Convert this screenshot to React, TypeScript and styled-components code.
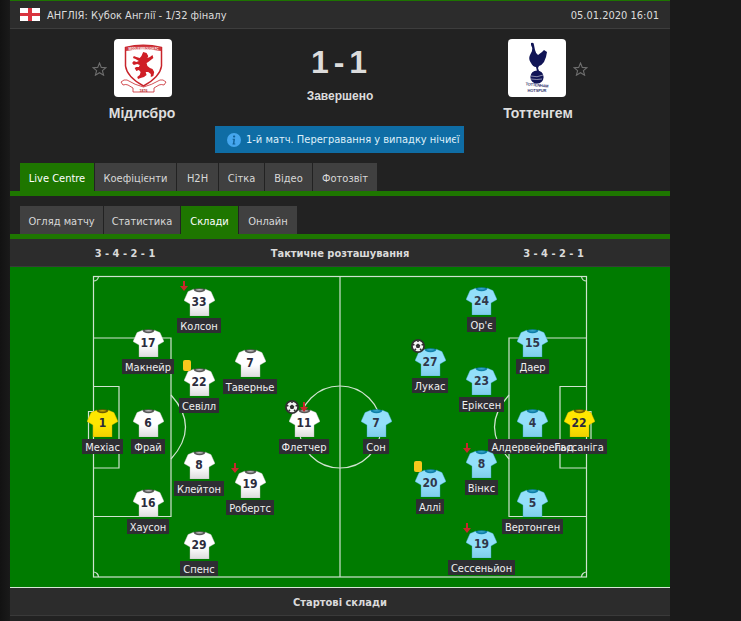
import React from "react";
import styled, { createGlobalStyle } from "styled-components";

const Global = createGlobalStyle`
  html, body { margin: 0; padding: 0; background: #191919; }
  body { font-family: "DejaVu Sans", "Liberation Sans", sans-serif; font-stretch: condensed; font-size: 11px; color: #e6e6e6; }
`;

const Page = styled.div`
  width: 741px;
  height: 621px;
  overflow: hidden;
  padding-left: 10px;
  box-sizing: border-box;
  background: linear-gradient(90deg, #121212 0, #1a1a1a 10px);
`;

const Container = styled.div`
  width: 660px;
  height: 621px;
  background: #222222;
  display: flex;
  flex-direction: column;
  border-top: 1px solid #1d7400;
  box-sizing: border-box;
`;

const LeagueBar = styled.div`
  height: 28px;
  box-sizing: border-box;
  background: #2c2c2c;
  border-bottom: 1px solid #3d3d3d;
  display: flex;
  align-items: center;
  padding: 0 11px 0 10px;
  gap: 7px;
`;

const LeagueName = styled.span`
  flex: 1;
  margin-top: 2px;
  color: #dcdcdc;
`;

const DateText = styled.span`
  margin-top: 2px;
  color: #dcdcdc;
`;

const MatchGrid = styled.div`
  display: grid;
  grid-template-columns: 264px 1fr 264px;
  height: 97px;
  padding-top: 10px;
  box-sizing: border-box;
`;

const Team = styled.div`
  display: flex;
  flex-direction: column;
  align-items: stretch;
`;

const TeamRow = styled.div`
  display: grid;
  grid-template-columns: 1fr 58px 1fr;
  align-items: center;
  column-gap: 7px;
  padding-left: ${p => (p.$left ? "1px" : "0")};
  padding-right: ${p => (p.$left ? "0" : "2px")};
`;

const Crest = styled.div`
  grid-column: 2;
  grid-row: 1;
  width: 58px;
  height: 58px;
  background: #fff;
  border-radius: 4px;
  overflow: hidden;
`;

const StarSlot = styled.div`
  grid-row: 1;
  grid-column: ${p => (p.$left ? 1 : 3)};
  justify-self: ${p => (p.$left ? "end" : "start")};
  display: flex;
  margin-top: 2px;
`;

const TeamName = styled.div`
  font-family: "Liberation Sans", Arial, sans-serif;
  font-stretch: normal;
  font-weight: 700;
  font-size: 14px;
  line-height: 16px;
  margin-top: 8px;
  text-align: center;
  color: #dedede;
`;

const Center = styled.div`
  display: flex;
  flex-direction: column;
  align-items: center;
`;

const Score = styled.div`
  font-family: "Liberation Sans", Arial, sans-serif;
  font-stretch: normal;
  font-weight: 700;
  font-size: 32px;
  line-height: 46px;
  word-spacing: -4px;
  margin-right: 2px;
  color: #dcdcdc;
`;

const Status = styled.div`
  font-family: "Liberation Sans", Arial, sans-serif;
  font-stretch: normal;
  font-weight: 700;
  font-size: 12px;
  line-height: 14px;
  margin-top: 4px;
  color: #dcdcdc;
`;

const BannerRow = styled.div`
  display: flex;
  padding-left: 205px;
`;

const Banner = styled.div`
  width: 249px;
  height: 27px;
  box-sizing: border-box;
  background: #0f6da5;
  display: flex;
  align-items: center;
  gap: 5px;
  padding-left: 12px;
  color: #dff0fa;
  white-space: nowrap;

  svg { flex: none; }
`;

const Tabs = styled.div`
  display: flex;
  gap: 1px;
  height: 28px;
  padding-left: 10px;
  margin-top: ${p => p.$mt}px;
`;

const Tab = styled.div`
  width: ${p => p.$w}px;
  padding-top: 2px;
  box-sizing: border-box;
  background: ${p => (p.$active ? "#1e7600" : "#404040")};
  color: ${p => (p.$active ? "#ffffff" : "#d8d8d8")};
  display: flex;
  align-items: center;
  justify-content: center;
`;

const GreenBand = styled.div`
  height: 5px;
  background: #1e7600;
`;

const TacticBar = styled.div`
  height: 28px;
  padding-top: 2px;
  box-sizing: border-box;
  background: #2c2c2c;
  border-bottom: 1px solid #3a3a3a;
  display: grid;
  grid-template-columns: 230px 200px 227px;
  align-items: center;
  text-align: center;
  font-weight: 700;
  color: #dadada;
`;

const Pitch = styled.div`
  position: relative;
  height: 320px;
  background: #007b00;
  border-bottom: 1px solid #d8e8d8;
  flex: none;
`;

const PitchLines = styled.svg`
  position: absolute;
  left: 0;
  top: 0;
`;

const Player = styled.div.attrs(p => ({ style: { left: p.$x, top: p.$y } }))`
  position: absolute;
  width: 0;
  height: 46px;
  display: flex;
  flex-direction: column;
  align-items: center;
`;

const ShirtBox = styled.div`
  position: relative;
  flex: none;
  width: 31px;
  height: 28px;
  margin-bottom: 2px;
`;

const Number = styled.span`
  position: absolute;
  left: 0;
  right: 0;
  top: 7px;
  text-align: center;
  font-weight: 700;
  font-size: 12px;
  line-height: 15px;
  color: ${p => (p.$kit === "away" ? "#30364a" : "#2b2b3c")};
`;

const Label = styled.div`
  flex: none;
  height: 15px;
  line-height: 17px;
  padding: 0 3px;
  background: #2e2e33;
  white-space: nowrap;
  color: #f0f0f0;
`;

const LabelText = styled.span`
  position: relative;
  z-index: 3;
`;

const Marker = styled.div`
  position: absolute;
  display: flex;
  z-index: 2;
  left: ${p => p.$l}px;
  top: ${p => p.$t}px;
`;

const Card = styled.div`
  width: 8px;
  height: 11px;
  border-radius: 2px;
  background: #f8c81c;
`;

const Footer = styled.div`
  height: 28px;
  padding-top: 2px;
  box-sizing: border-box;
  background: #2c2c2c;
  border-bottom: 1px solid #3a3a3a;
  display: flex;
  align-items: center;
  justify-content: center;
  font-weight: 700;
  color: #dadada;
`;

const Flag = () => (
  <svg width="20" height="13" viewBox="0 0 20 13">
    <rect width="20" height="13" fill="#fff" />
    <rect x="8" width="4" height="13" fill="#d9353f" />
    <rect y="5" width="20" height="3" fill="#d9353f" />
  </svg>
);

const Star = () => (
  <svg width="15" height="14" viewBox="0 0 15 14">
    <path d="M7.5 1 L9.3 5.4 L14 5.7 L10.4 8.7 L11.6 13.2 L7.5 10.7 L3.4 13.2 L4.6 8.7 L1 5.7 L5.7 5.4 Z" fill="none" stroke="#6e6e6e" strokeWidth="1.1" />
  </svg>
);

const InfoIcon = () => (
  <svg width="14" height="14" viewBox="0 0 14 14">
    <circle cx="7" cy="7" r="7" fill="#45a6ee" />
    <rect x="6" y="2.6" width="2.2" height="2" rx="0.8" fill="#0f5f96" />
    <path d="M5.6 5.8 H8 L7.4 10.4 H8.3 V11.4 H5.5 V10.4 H6 L6.4 6.8 H5.6 Z" fill="#0f5f96" />
  </svg>
);

const Boro = () => (
  <svg width="58" height="58" viewBox="0 0 58 58">
    <path d="M11.5 8.5 Q29 4 47.5 8.5 L47.5 27 Q46 38 29.5 47 Q13 38 11.5 27 Z" fill="#fff" stroke="#c8242b" strokeWidth="1.5" />
    <path d="M12 8.5 Q29 4.5 47 8.5 L47 12 Q29 8.5 12 12 Z" fill="#cf3a40" />
    <text x="29.5" y="10.8" textAnchor="middle" fontSize="2.8" fontFamily="Liberation Sans" fontWeight="700" fill="#fff" textLength="30">MIDDLESBROUGH FC</text>
    <path transform="translate(4.5 0) scale(0.85 1)" d="M29 13 L33 14 L35 17 L34 19 L37 18 L40 16 L41 19 L38 21 L35 23 L33 24 L34 27 L37 29 L40 30 L42 33 L41 37 L38 38 L38 35 L35 33 L32 33 L33 36 L30 38 L26 39 L23 40 L22 38 L25 36 L26 33 L24 31 L21 32 L19 29 L21 28 L24 28 L25 26 L22 25 L18 26 L16 24 L18 22 L21 23 L24 22 L20 20 L17 19 L18 17 L21 18 L25 19 L27 17 Z" fill="#cf1f26" />
    <path d="M7 43 q3 -3 6 -2 q8 5 16.500 7 q8 -2 16.500 -7 q3 -1 6 2 l-2 3 q-3 -1 -5 0 l-5 3 v4 h-21 v-4 l-5 -3 q-2 -1 -5 0 z" fill="#fff" stroke="#c8242b" strokeWidth="0.8" />
    <text x="29.500" y="52.500" textAnchor="middle" fontSize="3.6" fontFamily="Liberation Sans" fontWeight="700" fill="#b8242b">1876</text>
  </svg>
);

const Spurs = () => (
  <svg width="58" height="58" viewBox="0 0 58 58">
    <path d="M23 4 q3 -1 3 2 l1 5 q1 4 3 5 l4 -3 l2 -2 l3 2 l-1 5 l-2 5 q-2 3 -5 4 l-1 2 l1 3 l-2 0 l-1 -4 q-3 0 -5 -4 q-3 -4 -1 -8 l2 -4 q1 -3 -1 -6 z" fill="#111556" />
    <circle cx="29" cy="38" r="6.6" fill="#111556" />
    <path d="M23 37 q6 2 12 -1 M23 40 q6 1 11 0" stroke="#fff" strokeWidth="0.5" fill="none" />
    <text x="29" y="47.500" textAnchor="middle" fontSize="4" fontFamily="Liberation Sans" fontWeight="700" fill="#30336e" transform="rotate(6 29 47)" textLength="23">TOTTENHAM</text>
    <text x="29" y="53" textAnchor="middle" fontSize="4" fontFamily="Liberation Sans" fontWeight="700" fill="#30336e" textLength="19">HOTSPUR</text>
  </svg>
);

const kits = {
  home: { a: "#ffffff", b: "#dcdcdc", collar: "#585858", trim: "#bbbbbb" },
  away: { a: "#93dffa", b: "#7fcdea", collar: "#0e7fa8", trim: "#3aa6c8" },
  keeper: { a: "#ffe600", b: "#f0d000", collar: "#6f5d00", trim: "#c8a800" },
};

const Shirt = ({ kit }) => {
  const k = kits[kit];
  const id = `shirt-${kit}`;
  return (
    <svg width="31" height="28" viewBox="0 0 31 28">
      <defs>
        <linearGradient id={id} x1="0" y1="0" x2="0" y2="1">
          <stop offset="0.55" stopColor={k.a} />
          <stop offset="1" stopColor={k.b} />
        </linearGradient>
      </defs>
      <path d="M9.5 1.2 Q15.5 4.5 21.5 1.2 L27 3.6 L31 12.5 L25 16 L25 28 L6 28 L6 16 L0 12.5 L4 3.6 Z" fill={`url(#${id})`} stroke={k.trim} strokeWidth="0.4" />
      <path d="M9.5 1.2 Q15.5 -0.8 21.5 1.2 L20.5 3 Q15.5 5.5 10.5 3 Z" fill={k.collar} />
      <path d="M12 1.4 Q15.5 0.8 19 1.4 L18.5 2.2 Q15.5 3 12.5 2.2 Z" fill={k.trim} />
    </svg>
  );
};

const Arrow = () => (
  <svg width="8" height="10" viewBox="0 0 8 10">
    <path d="M3 0 H5 V5 H8 L4 10 L0 5 H3 Z" fill="#c8282c" />
  </svg>
);

const Ball = () => (
  <svg width="14" height="14" viewBox="0 0 14 14">
    <circle cx="7" cy="7" r="7" fill="#303030" />
    <circle cx="7" cy="7" r="5.2" fill="#f4f4f4" />
    <path d="M7 4.6 L9.3 6.3 L8.4 9 H5.6 L4.7 6.3 Z" fill="#303030" />
    <path d="M7 1.6 V3 M12.2 5.4 L10.6 6 M10.2 11.2 L9.2 9.8 M3.8 11.2 L4.8 9.8 M1.8 5.4 L3.4 6" stroke="#303030" strokeWidth="1.6" />
  </svg>
);

type P = { x: number; y: number; n: number; name: string; kit: string; arrow?: boolean; card?: boolean; ball?: boolean };

const players: P[] = [
  { x: 199, y: 288, n: 33, name: "Колсон", kit: "home", arrow: true },
  { x: 148, y: 329, n: 17, name: "Макнейр", kit: "home" },
  { x: 199, y: 368, n: 22, name: "Севілл", kit: "home", card: true },
  { x: 250, y: 349, n: 7, name: "Тавернье", kit: "home" },
  { x: 102.5, y: 409, n: 1, name: "Мехіас", kit: "keeper" },
  { x: 148, y: 409, n: 6, name: "Фрай", kit: "home" },
  { x: 304, y: 409, n: 11, name: "Флетчер", kit: "home", arrow: true, ball: true },
  { x: 199, y: 451, n: 8, name: "Клейтон", kit: "home" },
  { x: 250, y: 470, n: 19, name: "Робертс", kit: "home", arrow: true },
  { x: 148, y: 489, n: 16, name: "Хаусон", kit: "home" },
  { x: 199, y: 531, n: 29, name: "Спенс", kit: "home" },
  { x: 481.5, y: 287, n: 24, name: "Ор'є", kit: "away" },
  { x: 532.5, y: 329, n: 15, name: "Даер", kit: "away" },
  { x: 430, y: 348, n: 27, name: "Лукас", kit: "away", ball: true },
  { x: 481.5, y: 367, n: 23, name: "Еріксен", kit: "away" },
  { x: 376, y: 409, n: 7, name: "Сон", kit: "away" },
  { x: 579, y: 409, n: 22, name: "Гассаніга", kit: "keeper" },
  { x: 532.5, y: 409, n: 4, name: "Алдервейрельд", kit: "away" },
  { x: 481.5, y: 450, n: 8, name: "Вінкс", kit: "away", arrow: true },
  { x: 430, y: 469, n: 20, name: "Аллі", kit: "away", card: true },
  { x: 532.5, y: 489, n: 5, name: "Вертонген", kit: "away" },
  { x: 481.5, y: 530, n: 19, name: "Сессеньйон", kit: "away", arrow: true },
];

const L = "#cfe3cf";

const Lines = () => (
  <PitchLines width="660" height="320" viewBox="0 0 660 320">
    <g fill="none" stroke={L} strokeWidth="1.2" transform="translate(-10 -267)">
      <rect x="93.5" y="276.5" width="493" height="300.5" />
      <path d="M340 276.5 V577" />
      <circle cx="340" cy="427" r="41" />
      <path d="M93.5 338 H171 V516.5 H93.5" />
      <path d="M93.5 386.5 H119 V468 H93.5" />
      <path d="M93.5 411.5 H88.5 V443 H93.5" />
      <path d="M171 395 Q200 427 171 459" />
      <path d="M586.5 338 H509 V516.5 H586.5" />
      <path d="M586.5 386.5 H560 V468 H586.5" />
      <path d="M586.5 411.5 H591 V443 H586.5" />
      <path d="M509 395 Q480 427 509 459" />
      <path d="M93.5 281 A5 5 0 0 0 98.5 276.5" />
      <path d="M581.5 276.5 A5 5 0 0 0 586.5 281" />
      <path d="M93.5 572 A5 5 0 0 1 98.5 577" />
      <path d="M581.5 577 A5 5 0 0 1 586.5 572" />
    </g>
  </PitchLines>
);

const topTabs = [
  ["Live Centre", 74, true],
  ["Коефіцієнти", 81],
  ["H2H", 41],
  ["Сітка", 45],
  ["Відео", 47],
  ["Фотозвіт", 64],
];
const subTabs = [
  ["Огляд матчу", 83],
  ["Статистика", 76],
  ["Склади", 57, true],
  ["Онлайн", 58],
];

export default function App() {
  return (
    <>
      <Global />
      <Page>
        <Container>
          <LeagueBar>
            <Flag />
            <LeagueName>АНГЛІЯ: Кубок Англії - 1/32 фіналу</LeagueName>
            <DateText>05.01.2020 16:01</DateText>
          </LeagueBar>
          <MatchGrid>
            <Team>
              <TeamRow $left>
                <StarSlot $left><Star /></StarSlot>
                <Crest><Boro /></Crest>
              </TeamRow>
              <TeamName>Мідлсбро</TeamName>
            </Team>
            <Center>
              <Score>1 - 1</Score>
              <Status>Завершено</Status>
            </Center>
            <Team>
              <TeamRow>
                <Crest><Spurs /></Crest>
                <StarSlot><Star /></StarSlot>
              </TeamRow>
              <TeamName>Тоттенгем</TeamName>
            </Team>
          </MatchGrid>
          <BannerRow>
            <Banner>
              <InfoIcon />
              1-й матч. Перегравання у випадку нічиєї
            </Banner>
          </BannerRow>
          <Tabs $mt={10}>
            {topTabs.map(([t, w, a]) => (
              <Tab key={t as string} $w={w} $active={a}>{t}</Tab>
            ))}
          </Tabs>
          <GreenBand />
          <Tabs $mt={10}>
            {subTabs.map(([t, w, a]) => (
              <Tab key={t as string} $w={w} $active={a}>{t}</Tab>
            ))}
          </Tabs>
          <GreenBand />
          <TacticBar>
            <span>3 - 4 - 2 - 1</span>
            <span>Тактичне розташування</span>
            <span>3 - 4 - 2 - 1</span>
          </TacticBar>
          <Pitch>
            <Lines />
            {players.map(p => (
              <Player key={p.name} $x={p.x - 10} $y={p.y - 267}>
                <ShirtBox>
                  <Shirt kit={p.kit} />
                  <Number $kit={p.kit}>{p.n}</Number>
                  {p.arrow && <Marker $l={p.ball ? 11.5 : -3.5} $t={-7}><Arrow /></Marker>}
                  {p.card && <Marker $l={-0.5} $t={-8}><Card /></Marker>}
                  {p.ball && <Marker $l={-3.5} $t={-9}><Ball /></Marker>}
                </ShirtBox>
                <Label><LabelText>{p.name}</LabelText></Label>
              </Player>
            ))}
          </Pitch>
          <Footer>Стартові склади</Footer>
        </Container>
      </Page>
    </>
  );
}
